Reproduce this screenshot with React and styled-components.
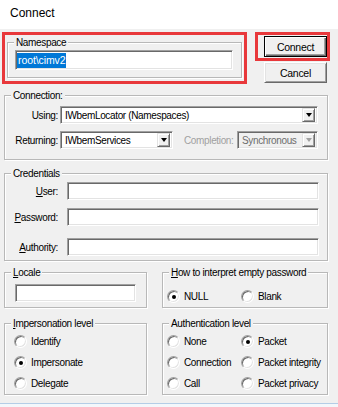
import React from "react";
import styled, { createGlobalStyle } from "styled-components";

const FONT = `"Liberation Sans", Arial, sans-serif`;

const GlobalStyle = createGlobalStyle`
  html, body { margin: 0; padding: 0; background: #ffffff; }
  body { font-family: ${FONT}; font-size: 10px; letter-spacing: -0.35px; color: #000; }
  * { box-sizing: border-box; }
`;

const Window = styled.div`
  width: 338px;
  height: 407px;
  display: flex;
  flex-direction: column;
  overflow: hidden;
  background: #fff;
`;

const TitleBar = styled.div`
  height: 29px;
  flex: none;
  display: flex;
  align-items: center;
  padding: 0 0 3px 10px;
  font-family: "Liberation Sans", Arial, sans-serif;
  font-size: 12px;
  letter-spacing: 0;
  background: #fff;
`;

const DialogBody = styled.div`
  height: 374px;
  flex: none;
  background: #f0f0f0;
  padding: 3px 0 0 2px;
  display: flex;
  flex-direction: column;
`;

const BottomEdge = styled.div`
  flex: 1;
  border-top: 1px solid #b4cde6;
  background: #f3f7fb;
`;

const TopRow = styled.div`
  display: flex;
  align-items: flex-start;
`;

const Highlight = styled.div`
  flex: none;
  width: ${(p) => p.$w}px;
  height: ${(p) => p.$h}px;
  border: 3px solid #e8383b;
  padding: ${(p) => p.$pad};
  display: flex;
  flex-direction: column;
`;

const ButtonColumn = styled.div`
  display: flex;
  flex-direction: column;
  margin-left: 8px;
`;

const Button = styled.button`
  width: 63px;
  height: 21px;
  margin: ${(p) => p.$m || 0};
  padding: 0;
  font-family: ${FONT};
  font-size: 10.5px;
  letter-spacing: -0.3px;
  color: #000;
  background: #f0f0f0;
  border: 1px solid;
  border-color: ${(p) => (p.$default ? "#000" : "#fff #696969 #696969 #fff")};
  box-shadow: ${(p) =>
    p.$default
      ? "inset 1px 1px 0 #fff, inset -1px -1px 0 #696969, inset -2px -2px 0 #a0a0a0"
      : "inset 1px 1px 0 #e3e3e3, inset -1px -1px 0 #a0a0a0"};
`;

const Sections = styled.div`
  display: flex;
  flex-direction: column;
  margin: 0 10px 0 2px;
`;

const Group = styled.fieldset`
  margin: ${(p) => p.$m || 0};
  padding: 0;
  min-width: 0;
  flex: ${(p) => (p.$fill ? 1 : "none")};
  border: 1px solid #b8b8b8;
  box-shadow: inset 1px 1px 0 #fff, 1px 1px 0 #fff;
`;

const Legend = styled.legend`
  margin-left: ${(p) => p.$ml ?? 6}px;
  padding: 0 2px;
  font-size: 10px;
  line-height: 13px;
  background: #f0f0f0;
  white-space: nowrap;
`;

const GroupContent = styled.div`
  padding: ${(p) => p.$pad};
`;

const FormRow = styled.div`
  display: flex;
  align-items: center;
  margin-top: ${(p) => p.$mt || 0}px;
`;

const FieldLabel = styled.label`
  flex: none;
  width: ${(p) => p.$w}px;
  padding-right: ${(p) => p.$pr || 0}px;
  text-align: ${(p) => p.$align || "right"};
  color: ${(p) => (p.$disabled ? "#a0a0a0" : "#000")};
  margin-left: ${(p) => p.$ml || 0}px;
  white-space: nowrap;
`;

const TextBox = styled.div`
  height: ${(p) => p.$h || 18}px;
  flex: 1;
  background: #fff;
  border: 1px solid;
  border-color: #a0a0a0 #fff #fff #a0a0a0;
  box-shadow: inset 1px 1px 0 #696969, inset -1px -1px 0 #e3e3e3;
  display: flex;
  align-items: center;
  padding-left: 1px;
`;

const Selected = styled.span`
  background: #0078d7;
  color: #fff;
  line-height: 15px;
  font-size: 10.5px;
  letter-spacing: -0.1px;
  padding: 0 1px;
`;

const Combo = styled.div`
  height: 18px;
  flex: ${(p) => (p.$w ? "none" : 1)};
  width: ${(p) => (p.$w ? `${p.$w}px` : "auto")};
  background: ${(p) => (p.$disabled ? "#f0f0f0" : "#fff")};
  border: 1px solid;
  border-color: #a0a0a0 #fff #fff #a0a0a0;
  box-shadow: inset 1px 1px 0 #696969, inset -1px -1px 0 #e3e3e3;
  display: flex;
  align-items: center;
  padding: 2px;
`;

const ComboText = styled.span`
  flex: 1;
  padding-left: 2px;
  white-space: nowrap;
  overflow: hidden;
  color: ${(p) => (p.$disabled ? "#6d6d6d" : "#000")};
`;

const DropButton = styled.span`
  flex: none;
  width: 13px;
  height: 14px;
  background: #f0f0f0;
  border: 1px solid;
  border-color: #e3e3e3 #696969 #696969 #e3e3e3;
  box-shadow: inset 1px 1px 0 #fff, inset -1px -1px 0 #a0a0a0;
  display: flex;
  align-items: center;
  justify-content: center;
  &::after {
    content: "";
    width: 0;
    height: 0;
    border-left: 3.5px solid transparent;
    border-right: 3.5px solid transparent;
    border-top: 4px solid ${(p) => (p.$disabled ? "#a0a0a0" : "#000")};
  }
`;

const PairRow = styled.div`
  display: grid;
  grid-template-columns: 143px 1fr;
  column-gap: 15px;
  margin-top: ${(p) => p.$mt || 0}px;
`;

const RadioGrid = styled.div`
  display: grid;
  grid-template-columns: ${(p) => p.$cols || "1fr"};
  grid-auto-rows: 21px;
`;

const RadioItem = styled.div`
  display: flex;
  align-items: center;
  gap: 4px;
  white-space: nowrap;
`;

const RadioCircle = styled.span`
  flex: none;
  width: 13px;
  height: 13px;
  border-radius: 50%;
  background: #fff;
  border: 1px solid;
  border-color: #a0a0a0 #fff #fff #a0a0a0;
  box-shadow: inset 1px 1px 0 #696969, inset -1px -1px 0 #e3e3e3;
  display: flex;
  align-items: center;
  justify-content: center;
  &::after {
    content: "";
    width: 4px;
    height: 4px;
    border-radius: 50%;
    background: #000;
    display: ${(p) => (p.$checked ? "block" : "none")};
  }
`;

const Radio = ({ label, checked }) => (
  <RadioItem>
    <RadioCircle $checked={checked} />
    <span>{label}</span>
  </RadioItem>
);

const ComboBox = ({ value, w, disabled }) => (
  <Combo $w={w} $disabled={disabled}>
    <ComboText $disabled={disabled}>{value}</ComboText>
    <DropButton $disabled={disabled} />
  </Combo>
);

export default function App() {
  return (
    <>
      <GlobalStyle />
      <Window>
        <TitleBar>Connect</TitleBar>
        <DialogBody>
          <TopRow>
            <Highlight $w={245} $h={52} $pad="1px 2px 3px 2px">
              <Group $fill>
                <Legend>Namespace</Legend>
                <GroupContent $pad="1px 8px 7px 7px">
                  <TextBox $h={20}>
                    <Selected>root\cimv2</Selected>
                  </TextBox>
                </GroupContent>
              </Group>
            </Highlight>
            <ButtonColumn>
              <Highlight $w={75} $h={29} $pad="1px 0 0 6px">
                <Button $default>Connect</Button>
              </Highlight>
              <Button $m="1px 0 0 9px">Cancel</Button>
            </ButtonColumn>
          </TopRow>

          <Sections>
            <Group $m="5px 0 0 0">
              <Legend>Connection:</Legend>
              <GroupContent $pad="4px 9px 10px 0">
                <FormRow>
                  <FieldLabel $w={55} $pr={2}>Using:</FieldLabel>
                  <ComboBox value="IWbemLocator (Namespaces)" />
                </FormRow>
                <FormRow $mt={7}>
                  <FieldLabel $w={55} $pr={2}>Returning:</FieldLabel>
                  <ComboBox value="IWbemServices" w={113} />
                  <FieldLabel $w={53} $ml={11} $align="left" $disabled>
                    Completion:
                  </FieldLabel>
                  <ComboBox value="Synchronous" disabled />
                </FormRow>
              </GroupContent>
            </Group>

            <Group $m="7px 0 0 0">
              <Legend>Credentials</Legend>
              <GroupContent $pad="2px 8px 4px 0">
                <FormRow>
                  <FieldLabel $w={62} $pr={9}>
                    <u>U</u>ser:
                  </FieldLabel>
                  <TextBox />
                </FormRow>
                <FormRow $mt={8}>
                  <FieldLabel $w={62} $pr={9}>
                    <u>P</u>assword:
                  </FieldLabel>
                  <TextBox />
                </FormRow>
                <FormRow $mt={12}>
                  <FieldLabel $w={62} $pr={9}>
                    <u>A</u>uthority:
                  </FieldLabel>
                  <TextBox />
                </FormRow>
              </GroupContent>
            </Group>

            <PairRow $mt={5}>
              <Group>
                <Legend>
                  <u>L</u>ocale
                </Legend>
                <GroupContent $pad="5px 10px 5px 10px">
                  <FormRow>
                    <TextBox />
                  </FormRow>
                </GroupContent>
              </Group>
              <Group>
                <Legend>
                  <u>H</u>ow to interpret empty password
                </Legend>
                <GroupContent $pad="7px 0 0 4px">
                  <RadioGrid $cols="74px 1fr">
                    <Radio label="NULL" checked />
                    <Radio label="Blank" />
                  </RadioGrid>
                </GroupContent>
              </Group>
            </PairRow>

            <PairRow $mt={9}>
              <Group>
                <Legend>
                  <u>I</u>mpersonation level
                </Legend>
                <GroupContent $pad="1px 0 0 9px">
                  <RadioGrid>
                    <Radio label="Identify" />
                    <Radio label="Impersonate" checked />
                    <Radio label="Delegate" />
                  </RadioGrid>
                </GroupContent>
              </Group>
              <Group>
                <Legend>Authentication level</Legend>
                <GroupContent $pad="1px 0 0 4px">
                  <RadioGrid $cols="74px 1fr">
                    <Radio label="None" />
                    <Radio label="Packet" checked />
                    <Radio label="Connection" />
                    <Radio label="Packet integrity" />
                    <Radio label="Call" />
                    <Radio label="Packet privacy" />
                  </RadioGrid>
                </GroupContent>
              </Group>
            </PairRow>
          </Sections>
        </DialogBody>
        <BottomEdge />
      </Window>
    </>
  );
}
